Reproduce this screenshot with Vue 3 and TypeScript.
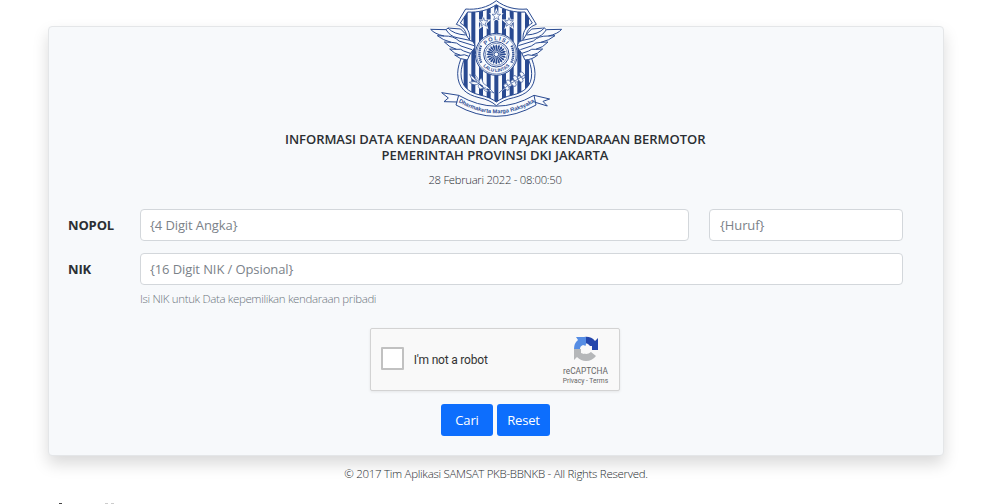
<script setup lang="ts">
import { ref } from 'vue'

const plate = ref('')
const series = ref('')
const nik = ref('')
const checked = ref(false)

const stripes = Array.from({ length: 11 }, (_, i) => 108 + i * 23)
const spokes = Array.from({ length: 20 }, (_, i) => i * 18)
const stars = ['translate(191 66)', 'translate(229 47)', 'translate(267 66)']

function reset(): void {
  plate.value = ''
  series.value = ''
  nik.value = ''
  checked.value = false
}
</script>

<template>
  <div class="page">
    <main class="card">
      <svg class="emblem" viewBox="0 0 450 375" aria-label="Polisi Lalu Lintas">
        <defs>
          <clipPath id="shieldInner">
            <path d="M229 14C205 31 174 38 143 36L121 69C137 79 149 91 149 113C149 151 123 185 123 221C123 258 145 277 180 285Q211 292 229 306Q247 292 278 285C313 277 335 258 335 221C335 185 309 151 309 113C309 91 321 79 337 69L315 36C284 38 253 31 229 14Z" />
          </clipPath>
          <path id="arcTop" d="M187 163A42 42 0 0 1 271 163" />
          <path id="arcBottom" d="M176 163A53 53 0 0 0 282 163" />
          <path id="arcRibbon" d="M114 305Q229 375 346 305" />
          <g id="wing">
            <path d="M32 88L78 89L84 84L122 87Q139 101 149 121Q167 126 164 143Q151 157 142 180Q120 179 104 165L122 166Q103 162 89 147L110 148Q88 143 73 126L94 127Q69 121 52 107L72 108Q44 102 32 88Z" />
            <path d="M78 89Q91 110 111 113L149 121M84 84Q101 103 137 105M72 108Q101 107 117 123L162 137M94 127Q111 126 123 138L156 149M110 148Q123 145 131 153L151 160M122 166Q132 161 147 169" />
          </g>
        </defs>
        <path class="white line" d="M229 2C202 23 169 30 137 27L109 73C130 80 140 94 140 113C140 150 113 183 113 221C113 265 140 284 177 293Q211 300 229 317Q247 300 281 293C318 284 345 265 345 221C345 183 318 150 318 113C318 94 328 80 349 73L321 27C289 30 256 23 229 2Z" />
        <g clip-path="url(#shieldInner)">
          <rect v-for="x in stripes" :key="x" class="ink" :x="x" y="0" width="12" height="320" />
        </g>
        <path class="line" d="M229 14C205 31 174 38 143 36L121 69C137 79 149 91 149 113C149 151 123 185 123 221C123 258 145 277 180 285Q211 292 229 306Q247 292 278 285C313 277 335 258 335 221C335 185 309 151 309 113C309 91 321 79 337 69L315 36C284 38 253 31 229 14Z" />
        <use href="#wing" class="white line" />
        <use href="#wing" class="white line" transform="translate(457 0) scale(-1 1)" />
        <g v-for="star in stars" :key="star" :transform="star">
          <path class="star-edge" d="M0-13L3-4L13-4L5 3L8 13L0 7L-8 13L-5 3L-13-4L-3-4Z" />
          <path class="white thin" d="M0-13L3-4L13-4L5 3L8 13L0 7L-8 13L-5 3L-13-4L-3-4Z" />
        </g>
        <circle class="white line" cx="229" cy="163" r="63" />
        <circle class="thin" cx="229" cy="163" r="59" />
        <circle class="line" cx="229" cy="163" r="38" />
        <circle class="thin" cx="229" cy="163" r="33" />
        <path v-for="angle in spokes" :key="angle" class="ink" :transform="`rotate(${angle} 229 163)`" d="M228 154L226 138Q229 129 232 138L230 154Z" />
        <circle class="white line" cx="229" cy="163" r="7" />
        <path class="laurel" d="M183 137Q173 163 184 189M275 137Q285 163 274 189" />
        <text class="ring-text"><textPath href="#arcTop" startOffset="50%" text-anchor="middle">POLISI</textPath></text>
        <text class="ring-text small"><textPath href="#arcBottom" startOffset="50%" text-anchor="middle">LALU LINTAS</textPath></text>
        <g class="white thin">
          <path d="M149 223Q162 230 171 245Q154 242 149 223ZM164 223Q174 233 179 248Q165 239 164 223ZM148 247Q162 241 178 250Q163 260 148 247ZM184 233L190 250L201 258L222 279Q191 269 174 249M180 251Q169 260 181 267L198 263M191 260Q188 273 202 275L211 269" />
          <g transform="rotate(-31 282 244)">
            <ellipse cx="254" cy="247" rx="6" ry="11" /><ellipse cx="266" cy="241" rx="6" ry="11" />
            <ellipse cx="278" cy="248" rx="6" ry="11" /><ellipse cx="290" cy="240" rx="6" ry="11" />
            <ellipse cx="302" cy="248" rx="6" ry="11" /><ellipse cx="313" cy="241" rx="6" ry="11" />
            <path d="M225 251Q244 244 319 244" />
          </g>
        </g>
        <path class="white line" d="M116 286L65 278L85 294L72 305L112 306M342 286L389 297L369 304L382 318L343 306M116 286L108 315Q229 383 348 315L342 286Q229 351 116 286Z" />
        <text class="ribbon-text"><textPath href="#arcRibbon" startOffset="50%" text-anchor="middle">Dharmakerta Marga Raksyaka</textPath></text>
      </svg>
      <h1><span class="first">INFORMASI DATA KENDARAAN DAN PAJAK KENDARAAN BERMOTOR</span><br><span class="second">PEMERINTAH PROVINSI DKI JAKARTA</span></h1>
      <p class="date">28 Februari 2022 - 08:00:50</p>
      <form @submit.prevent @reset.prevent="reset">
        <div class="row first-row">
          <label for="plate">NOPOL</label>
          <input id="plate" v-model="plate" class="field plate" placeholder="{4 Digit Angka}">
          <input v-model="series" class="field series" placeholder="{Huruf}" aria-label="Huruf">
        </div>
        <div class="row">
          <label for="nik">NIK</label>
          <input id="nik" v-model="nik" class="field nik" placeholder="{16 Digit NIK / Opsional}">
        </div>
        <p class="hint">Isi NIK untuk Data kepemilikan kendaraan pribadi</p>
        <div class="captcha">
          <input id="robot" v-model="checked" type="checkbox" class="check">
          <label for="robot" class="robot">I'm not a robot</label>
          <div class="brand">
            <svg class="recaptcha" viewBox="0 0 26 26">
              <path fill="#2446ac" d="M25 2V14H15L17 10Q15 7 11 7V1Q18 0 22 5Z" />
              <path fill="#568de4" d="M1 13Q1 7 5 4L3 1H13V10L10 9Q7 10 7 13Z" />
              <path fill="#b5b7b9" d="M1 13H9L9 16Q13 20 18 16L23 20Q19 25 13 25Q8 25 4 21L1 24Z" />
              <path fill="#f9f9f9" d="M13 8L16 10L19 10V14L16 16L13 15L11 18L8 17V13L12 12Z" />
            </svg>
            <span class="brand-name">reCAPTCHA</span>
            <span class="terms">Privacy - Terms</span>
          </div>
        </div>
        <div class="actions">
          <button type="submit" class="search">Cari</button>
          <button type="reset">Reset</button>
        </div>
      </form>
    </main>
    <footer>© 2017 Tim Aplikasi SAMSAT PKB-BBNKB - All Rights Reserved.</footer>
    <div class="edge"><i /><i /><i /></div>
  </div>
</template>

<style>
html, body { margin: 0; background: #fff; overflow: hidden; }
</style>

<style scoped>
* { box-sizing: border-box; }
.page { height: 504px; padding: 26px 56px 0 48px; display: flex; flex-direction: column; font-family: "Open Sans", "Noto Sans", sans-serif; color: #2b2f33; background: #fff; }
.card { flex: none; height: 430px; padding: 0 40px 0 19px; background: #f7f9fb; border: 1px solid #e4e6e8; border-radius: 4px; box-shadow: 0 8px 16px rgba(0, 0, 0, .15); }
.emblem { display: block; width: 150px; height: 125px; margin: -27px 0 0 352px; }
.white { fill: #f9fbfe; }
.ink { fill: #294a91; }
.line { stroke: #294a91; stroke-width: 3; stroke-linejoin: round; }
.line:not(.white), .thin:not(.white) { fill: none; }
.thin { stroke: #294a91; stroke-width: 1.8; }
.star-edge { fill: #f9fbfe; stroke: #f9fbfe; stroke-width: 7; }
.laurel { fill: none; stroke: #294a91; stroke-width: 7; stroke-dasharray: 4 2; }
.ring-text { fill: #294a91; font: 700 17px "Liberation Sans", sans-serif; letter-spacing: 3px; }
.ring-text.small { font-size: 14px; letter-spacing: 0; }
.ribbon-text { fill: #294a91; font: 700 17px "Liberation Sans", sans-serif; letter-spacing: 0; }
h1 { width: 420px; margin: 6px 0 0 217px; font-size: 13px; line-height: 16px; font-weight: 600; text-align: center; white-space: nowrap; }
.first { letter-spacing: -.04px; }
.second { letter-spacing: -.04px; }
p { margin: 0; }
.date { width: 420px; margin: 8px 0 0 217px; line-height: 17px; font-size: 11.3px; font-weight: 300; text-align: center; letter-spacing: -.28px; }
form { margin-top: 21px; }
.row { height: 32px; display: flex; align-items: center; }
.first-row { margin-bottom: 12px; }
.row label { flex: 0 0 72px; font-size: 13px; font-weight: 700; letter-spacing: -.15px; }
.field { flex: none; height: 32px; border: 1px solid #d3d7db; border-radius: 4px; background: #fff; padding: 0 10px 0 9px; font: 13px "Open Sans", sans-serif; letter-spacing: -.1px; color: #212529; outline: none; }
.field::placeholder { color: #7b8289; opacity: 1; }
.plate { width: 549px; }
.series { width: 194px; margin-left: 20px; padding-left: 10px; }
.nik { width: 763px; }
.hint { margin: 5px 0 0 72px; font-size: 11.5px; line-height: 17px; font-weight: 300; color: #6c757d; letter-spacing: -.36px; }
.captcha { width: 250px; height: 63px; margin: 21px 0 0 302px; display: flex; align-items: center; border: 1px solid #d3d3d3; border-radius: 2px; background: #f9f9f9; box-shadow: 0 1px 3px rgba(0, 0, 0, .08); }
.check { appearance: none; width: 23px; height: 23px; margin: 0 0 3px 10px; border: 2px solid #c1c1c1; border-radius: 1px; background: #fff; }
.robot { width: 140px; margin: 1px 0 0 10px; font: 12px Roboto, sans-serif; letter-spacing: -.2px; color: #333; }
.brand { width: 68px; display: flex; flex-direction: column; align-items: center; font-family: Roboto, sans-serif; color: #666; }
.recaptcha { width: 26px; height: 26px; margin: 3px 0 0 1px; }
.brand-name { margin-top: 3px; font-size: 8.3px; line-height: 12px; }
.terms { font-size: 6.7px; line-height: 9px; white-space: nowrap; }
.actions { display: flex; gap: 4px; margin: 13px 0 0 373px; }
button { width: 53px; height: 32px; padding: 0; border: 0; border-radius: 3px; background: #0d6efd; color: #fff; font: 13px "Open Sans", sans-serif; letter-spacing: -.15px; }
.search { width: 52px; }
footer { margin-top: 9px; line-height: 17px; font-size: 11.5px; font-weight: 300; text-align: center; letter-spacing: -.3px; white-space: nowrap; }
.edge { display: flex; margin: auto 0 0 11px; height: 1px; align-items: flex-end; }
.edge i { width: 3px; height: 1px; background: #444; margin-right: 43px; }
.edge i:nth-child(2), .edge i:nth-child(3) { background: #ccc; margin-right: 3px; }
</style>
